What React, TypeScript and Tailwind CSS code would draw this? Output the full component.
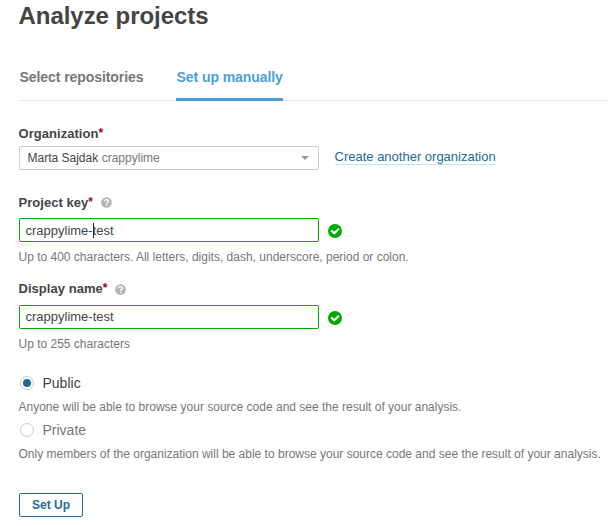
import type { ReactNode } from "react";

function HelpIcon() {
  return (
    <svg className="ml-2 size-[11px] shrink-0" viewBox="0 0 12 12" aria-hidden="true">
      <circle cx="6" cy="6" r="5.8" fill="#b4b4b4" />
      <path d="M4 4.700C4 3.400 4.900 2.800 6.100 2.800c1.200 0 2 .7 2 1.700C8.100 5.900 6.200 5.900 6.200 7.200" fill="none" stroke="#fff" strokeWidth="1.500" />
      <path d="M5.400 8h1.600v1.500H5.400z" fill="#fff" />
    </svg>
  );
}

function ValidIcon() {
  return (
    <svg className="mt-[2px] ml-[9px] size-[14px] shrink-0" viewBox="0 0 14 14" aria-hidden="true">
      <circle cx="7" cy="7" r="7" fill="#00aa00" />
      <path d="M3.200 6.500L6.200 9.300L10.900 4.700" fill="none" stroke="#fff" strokeWidth="2.200" />
    </svg>
  );
}

function Label({ children, help, raised }: { children: ReactNode; help?: boolean; raised?: boolean }) {
  return (
    <div className="-ml-[0.5px] flex h-5 items-center text-[13px] leading-[15px] font-bold text-[#444]">
      <span className={raised ? "pb-[2px] tracking-[0.04px]" : "tracking-[0.04px]"}>{children}</span>
      <span className={raised ? "pb-px text-[12px] text-[#a4030f]" : "text-[12px] text-[#a4030f]"}>*</span>
      {help && <HelpIcon />}
    </div>
  );
}

function Field({ before, after }: { before: string; after: string }) {
  return (
    <div className="mt-[6px] flex h-6 items-center">
      <div className={after ? "flex h-6 w-[300px] items-center rounded-[2px] border border-[#00aa00] pl-[5.5px] text-[13px] leading-[15px] text-[#444]" : "flex h-6 w-[300px] items-center rounded-[2px] border border-[#00aa00] pl-[5.5px] text-[13px] text-[#444]"}>
        <span>{before}</span>
        {after && <span className="-mr-px h-[15px] w-px bg-[#222]" />}
        <span>{after}</span>
      </div>
      <ValidIcon />
    </div>
  );
}

function Hint({ children }: { children: ReactNode }) {
  return <p className="-ml-[0.5px] h-5 text-[12px] leading-5 whitespace-nowrap text-[#777]">{children}</p>;
}

function Choice({ label, checked }: { label: string; checked?: boolean }) {
  return (
    <div className="flex h-5 items-center pl-px">
      <span className="flex size-[14px] items-center justify-center rounded-full border border-[#cdcdcd]">
        {checked && <span className="size-2 rounded-full bg-[#236a97]" />}
      </span>
      <span className={checked ? "ml-[8.5px] text-[14px] text-[#444]" : "ml-[8.5px] text-[14px] text-[#777]"}>{label}</span>
    </div>
  );
}

export default function App() {
  return (
    <main className="h-[526px] w-[608px] overflow-hidden bg-white pl-[19px] font-['Liberation_Sans',Arial,sans-serif]">
      <h1 className="-ml-[0.5px] h-8 text-[24px] leading-8 font-bold tracking-[-0.04px] text-[#444]">Analyze projects</h1>
      <nav className="mt-7 flex h-[41px] border-b border-[#e6e6e6] text-[14px] leading-[34px] font-bold tracking-[-0.07px] whitespace-nowrap">
        <span className="w-[157px] pl-[0.5px] text-[#777]">Select repositories</span>
        <span className="h-[41px] w-[107px] border-b-[3px] border-[#4b9fd5] pl-[0.5px] text-[#4b9fd5]">Set up manually</span>
      </nav>

      <section className="mt-[22px]">
        <Label>Organization</Label>
        <div className="mt-[3px] flex h-6">
          <div className="flex h-6 w-[300px] items-center rounded-[2px] border border-[#cdcdcd] pr-[9px] pl-[7.5px] text-[12px]">
            <span className="text-[#444]">Marta Sajdak</span>
            <span className="ml-[3.5px] text-[#777]">crappylime</span>
            <svg className="ml-auto h-1 w-2" viewBox="0 0 8 4" aria-hidden="true">
              <path d="M0 0h8L4 4z" fill="#999" />
            </svg>
          </div>
          <a className="mt-[2px] ml-[15.5px] h-[17px] border-b border-[#cae3f2] text-[13px] leading-[17px] text-[#236a97]">Create another organization</a>
        </div>
      </section>

      <section className="mt-[22px]">
        <Label help>Project key</Label>
        <Field before="crappylime-" after="test" />
        <div className="mt-[5px]"><Hint>Up to 400 characters. All letters, digits, dash, underscore, period or colon.</Hint></div>
      </section>

      <section className="mt-3">
        <Label help raised>Display name</Label>
        <Field before="crappylime-test" after="" />
        <div className="mt-[5px]"><Hint>Up to 255 characters</Hint></div>
      </section>

      <section className="mt-[19px]">
        <Choice label="Public" checked />
        <div className="mt-1"><Hint>Anyone will be able to browse your source code and see the result of your analysis.</Hint></div>
        <div className="mt-[3px]"><Choice label="Private" /></div>
        <div className="mt-1"><Hint>Only members of the organization will be able to browse your source code and see the result of your analysis.</Hint></div>
      </section>

      <button className="mt-[29px] flex h-6 w-16 items-center justify-center rounded-[2px] border border-[#236a97] text-[12px] font-bold text-[#236a97]">Set Up</button>
    </main>
  );
}
